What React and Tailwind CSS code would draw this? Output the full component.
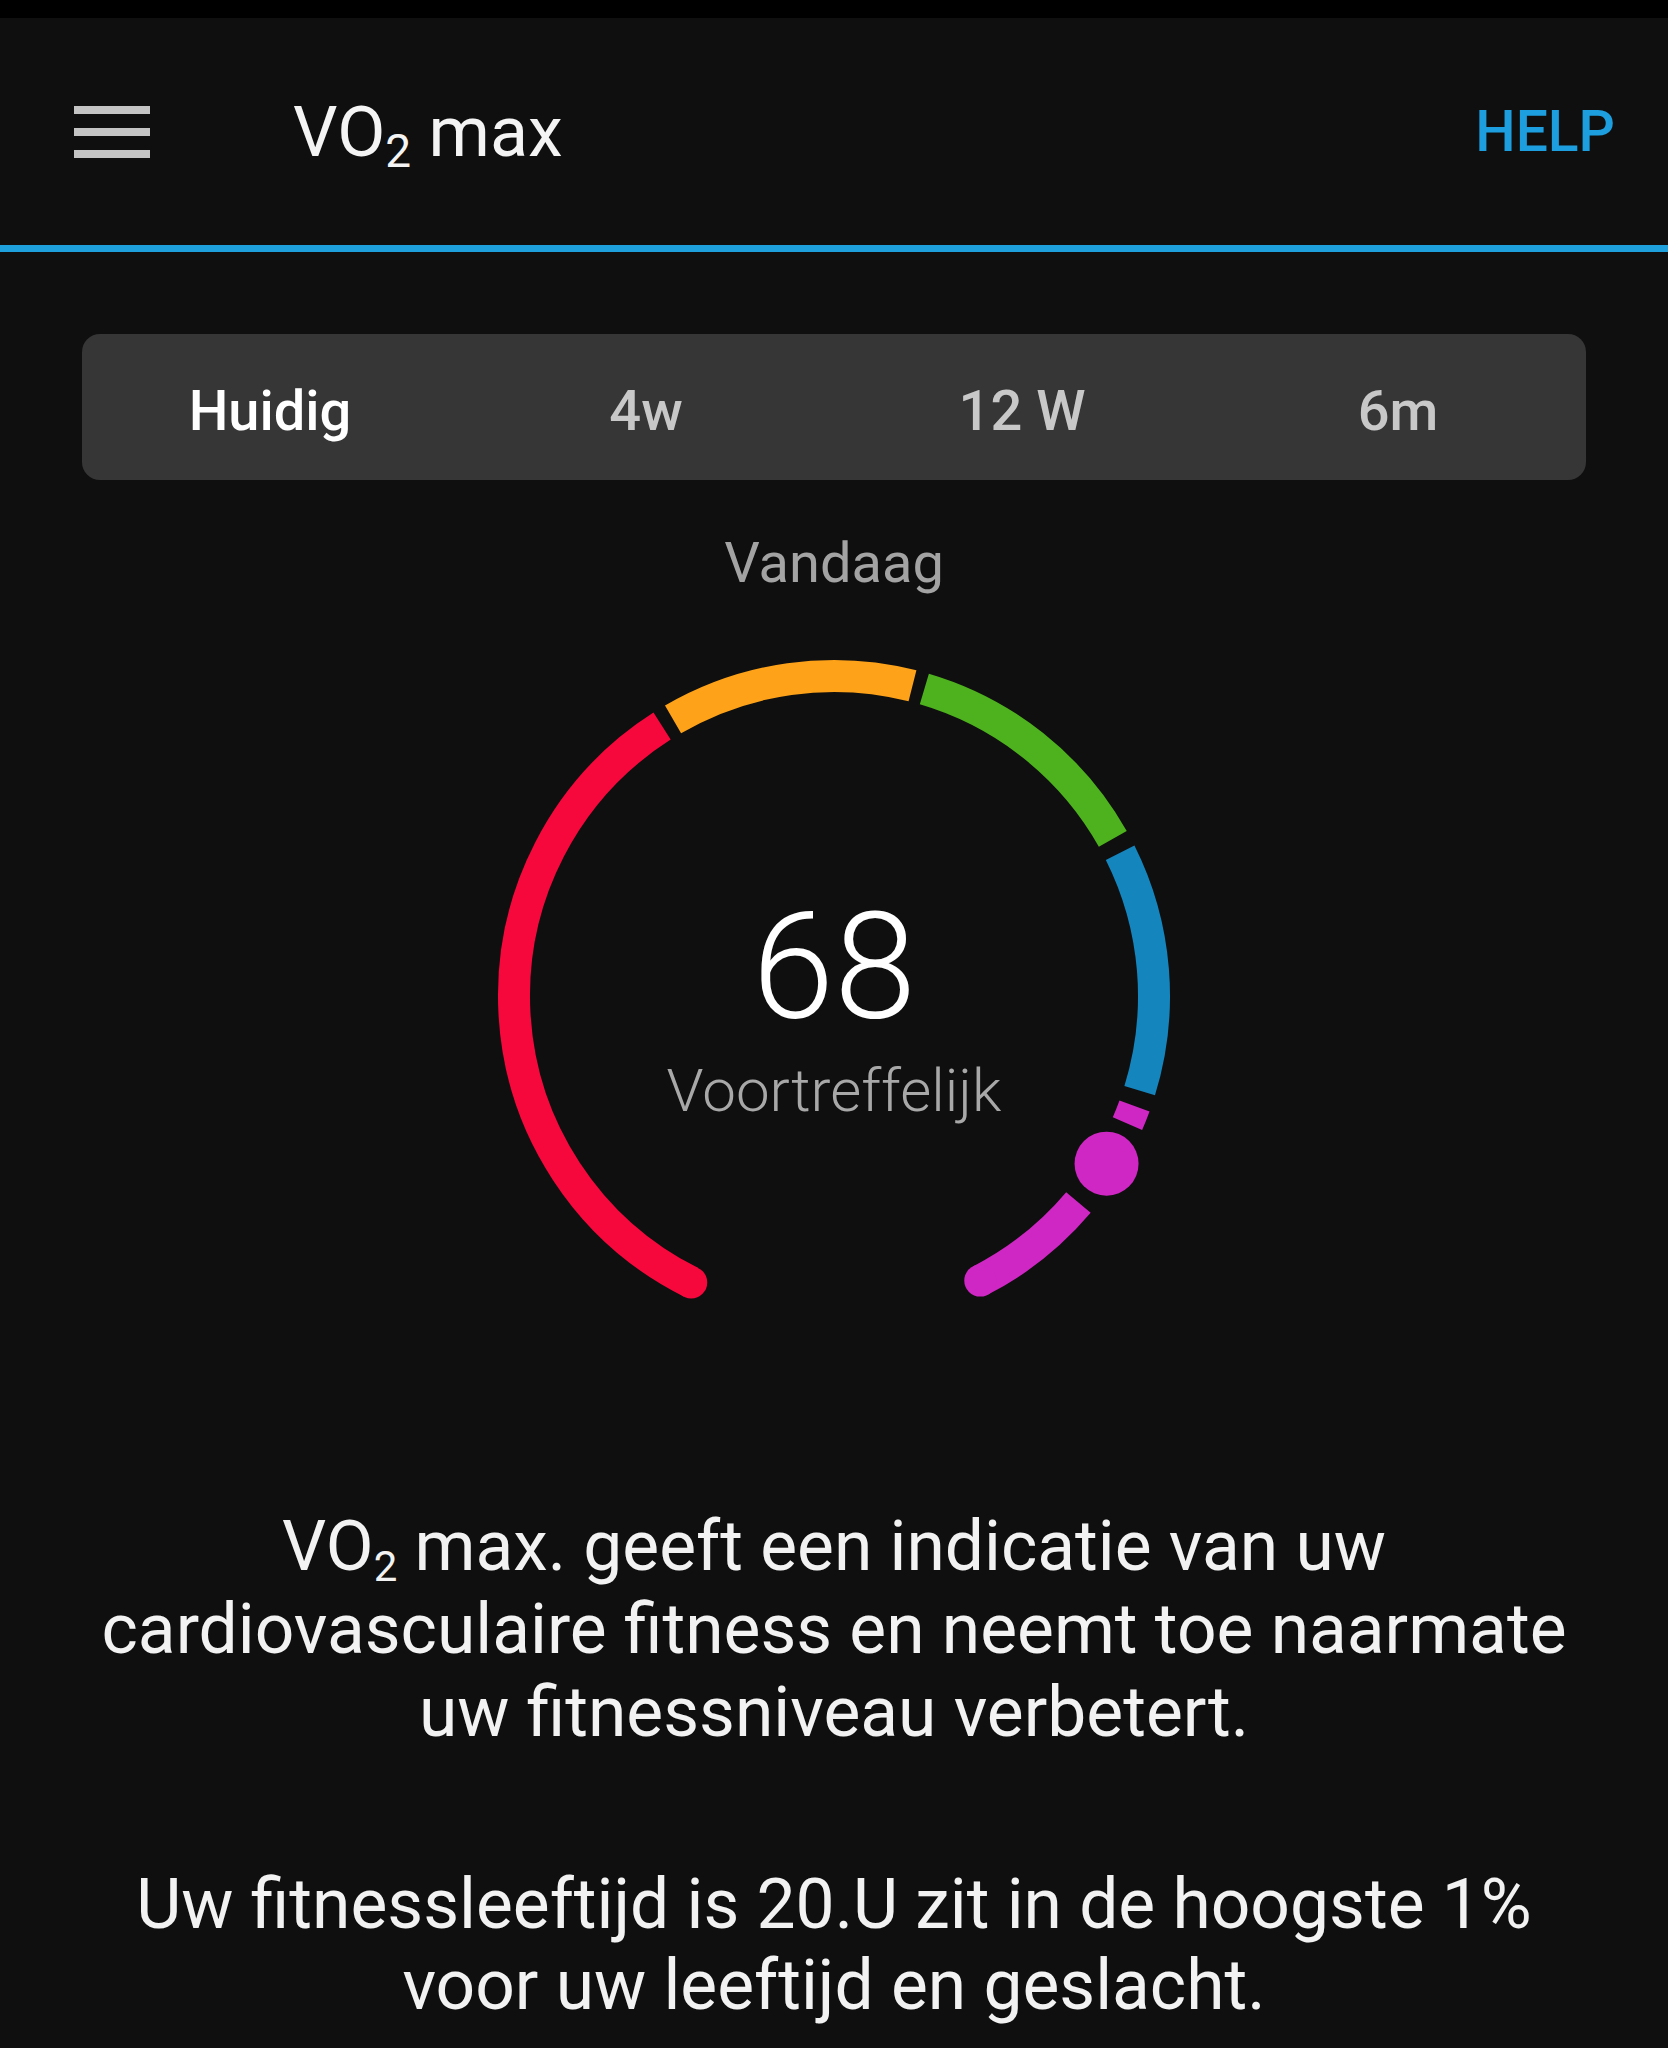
import React from "react";

// VO2 max gauge screen
const CX = 360;
const CY = 360;
const R = 320;

function pt(deg) {
  const a = (deg * Math.PI) / 180;
  return [CX + R * Math.sin(a), CY - R * Math.cos(a)];
}

function arc(from, to) {
  const [x1, y1] = pt(from);
  const [x2, y2] = pt(to);
  const large = to - from > 180 ? 1 : 0;
  return `M ${x1} ${y1} A ${R} ${R} 0 ${large} 1 ${x2} ${y2}`;
}

// round: which end gets a rounded tip ("start" | "end" | null)
const segments = [
  { from: -153.5, to: -32.5, color: "#f7083c", round: "start" },
  { from: -30.2, to: 14.2, color: "#fda219" },
  { from: 16.4, to: 60.6, color: "#4db21e" },
  { from: 63.4, to: 107.2, color: "#1585be" },
  { from: 110.1, to: 113.5, color: "#cf27c3" },
  { from: 130.2, to: 152.8, color: "#cf27c3", round: "end" },
];

function Gauge() {
  const [dx, dy] = pt(121.6);
  return (
    <svg width="720" height="720" viewBox="0 0 720 720" className="col-start-1 row-start-1">
      {segments.map((s, i) => {
        const tip = s.round ? pt(s.round === "start" ? s.from : s.to) : null;
        return (
          <g key={i}>
            <path d={arc(s.from, s.to)} fill="none" stroke={s.color} strokeWidth="32" />
            {tip && <circle cx={tip[0]} cy={tip[1]} r="16" fill={s.color} />}
          </g>
        );
      })}
      <circle cx={dx} cy={dy} r="32" fill="#cf27c3" />
    </svg>
  );
}

export default function App() {
  const tabs = ["Huidig", "4w", "12 W", "6m"];
  return (
    <div className="w-[1668px] h-[2048px] overflow-hidden bg-[#0f0f0f] text-white font-['Roboto','Liberation_Sans',sans-serif]">
      <div className="h-[18px] bg-black" />
      <header className="h-[227px] flex items-center pl-[74px] pr-[53px]">
        <svg width="76" height="52" viewBox="0 0 76 52">
          <rect x="0" y="0" width="76" height="8" fill="#c4c4c4" />
          <rect x="0" y="22" width="76" height="8" fill="#c4c4c4" />
          <rect x="0" y="44" width="76" height="8" fill="#c4c4c4" />
        </svg>
        <h1 className="ml-[143px] text-[70px] leading-none font-normal text-[#f4f4f4]">
          VO<sub className="text-[46px]">2</sub> max
        </h1>
        <div className="ml-auto text-[57px] leading-none font-medium text-[#1d9fdf]">HELP</div>
      </header>
      <div className="h-[7px] bg-[#1ea0dc]" />

      <div className="mx-[82px] mt-[82px] h-[146px] pt-[8px] rounded-[18px] bg-[#363636] grid grid-cols-4 items-center">
        {tabs.map((t, i) => (
          <div
            key={t}
            className={`text-center text-[56px] leading-none font-medium ${i === 0 ? "text-white" : "text-[#c8c8c8]"}`}
          >
            {t}
          </div>
        ))}
      </div>

      <div className="mt-[55px] text-center text-[56px] leading-none text-[#a3a3a3]">Vandaag</div>

      <div className="mt-[45px] flex justify-center">
        <div className="grid w-[720px] h-[720px]">
          <Gauge />
          <div className="col-start-1 row-start-1 flex flex-col items-center pt-[258px]">
            <div className="text-[148px] leading-none font-light text-white">68</div>
            <div className="mt-[19px] text-[60px] leading-none font-light text-[#a8a8a8]">Voortreffelijk</div>
          </div>
        </div>
      </div>

      <p className="mt-[149px] text-center text-[69.5px] leading-[83px] text-[#f2f2f2]">
        VO<sub className="text-[42px]">2</sub> max. geeft een indicatie van uw
        <br />
        cardiovasculaire fitness en neemt toe naarmate
        <br />
        uw fitnessniveau verbetert.
      </p>

      <p className="mt-[110px] text-center text-[69.5px] leading-[81px] text-[#f2f2f2]">
        Uw fitnessleeftijd is 20.U zit in de hoogste 1%
        <br />
        voor uw leeftijd en geslacht.
      </p>
    </div>
  );
}
